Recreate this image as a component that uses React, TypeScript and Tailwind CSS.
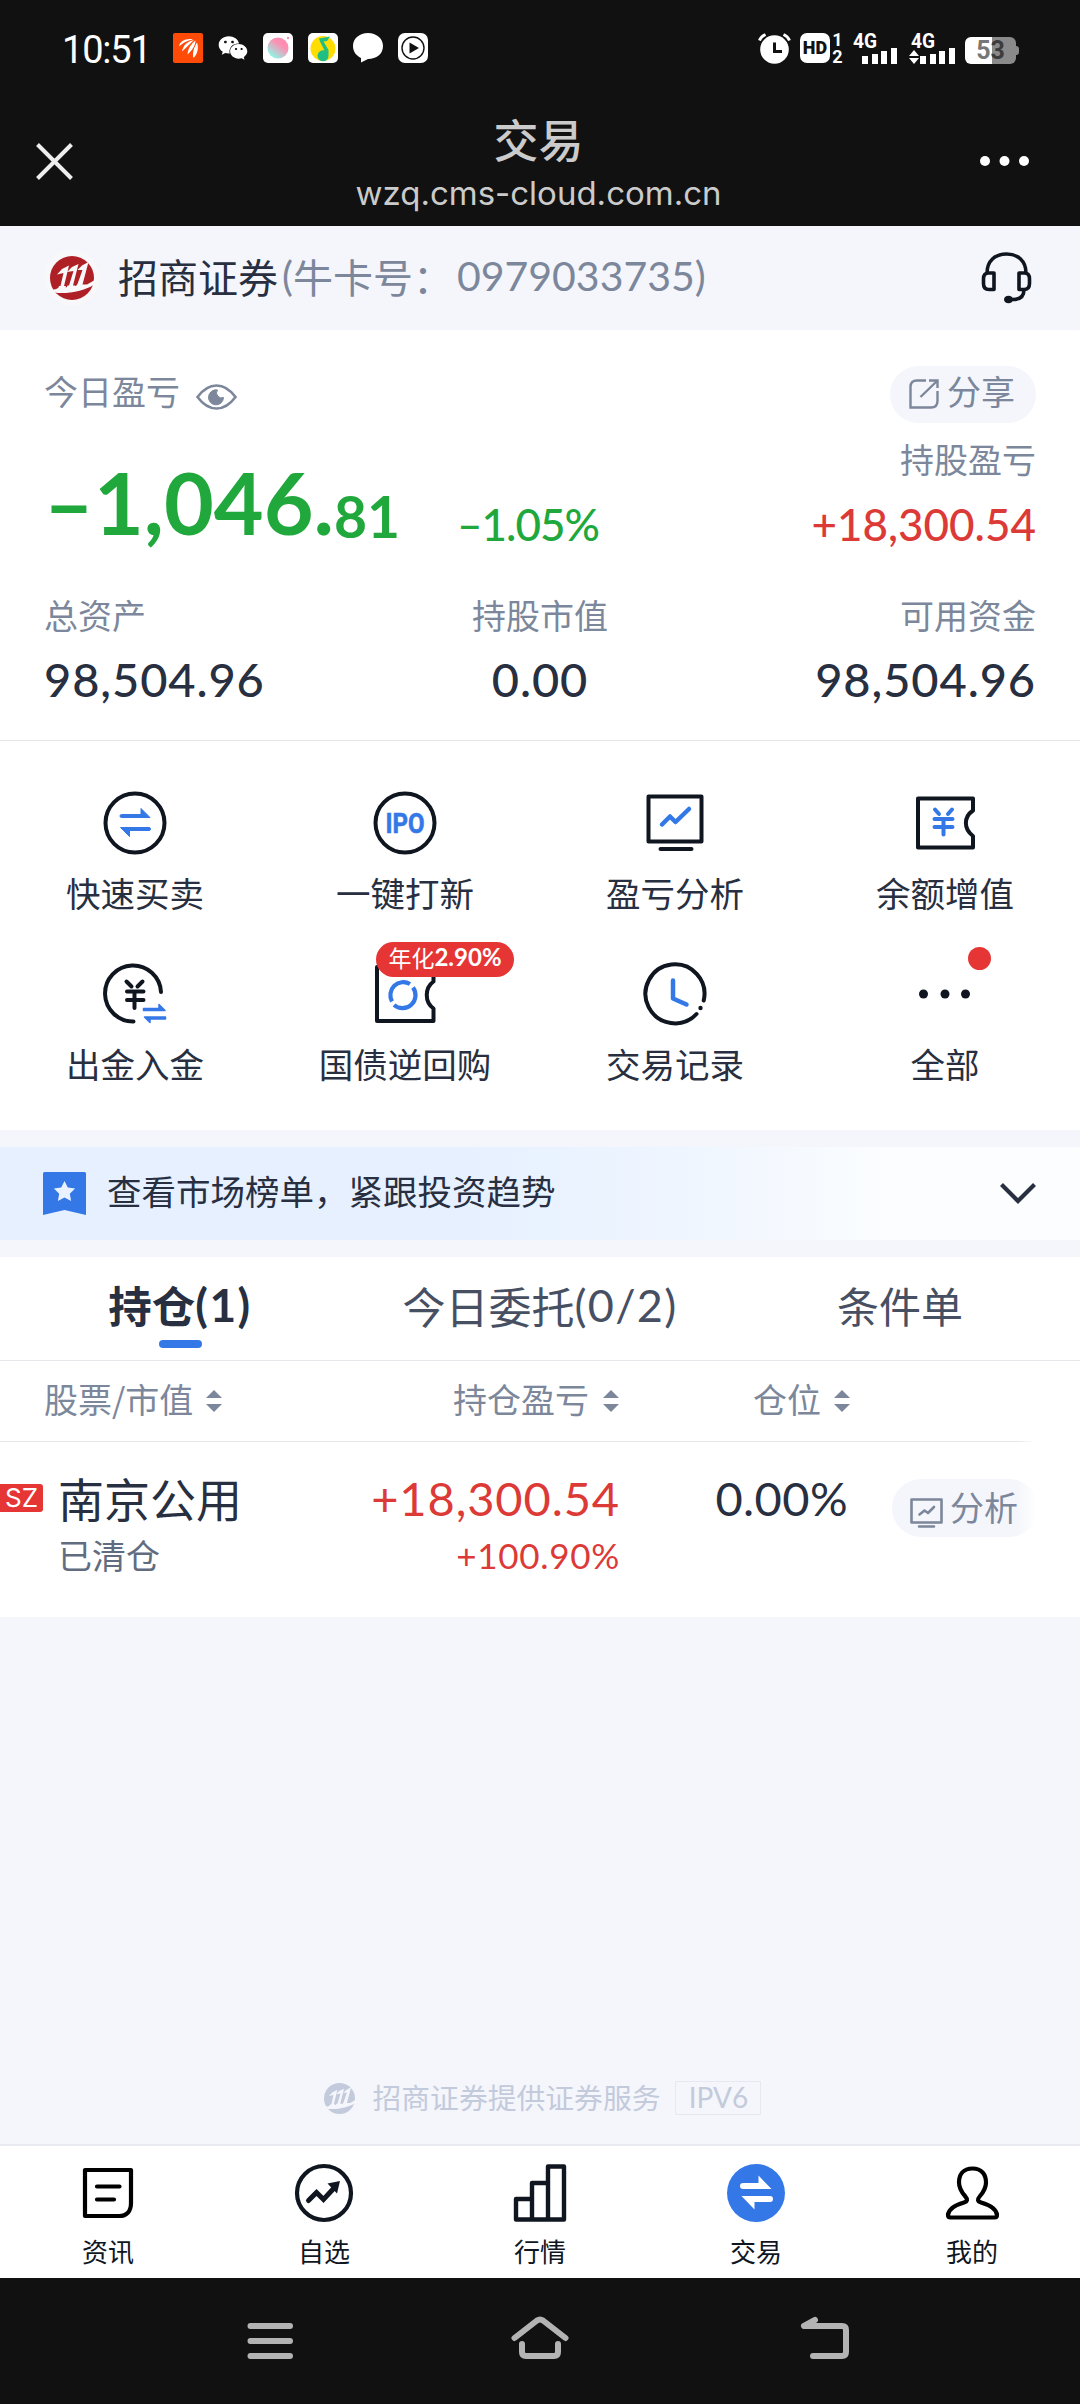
import React from 'react'
import { FaWeixin } from 'react-icons/fa'

const INK = '#10161f'
const BLUE = '#3478e8'

const Logo = ({ size, color, bg }: { size: number; color: string; bg: string }) => (
  <svg width={size} height={size} viewBox="0 0 44 44" fill="none">
    <circle cx="22" cy="22" r="22" fill={color} />
    <path d="M7 18.500l5-5.500 7-3.500-5 20.500h2l-1 2-7 .5 1-2.500h1.500L13.500 17zM17 16l5-5 6.500-3-5.500 21.500h2.500L24.500 31l-8 1 1-2.500H19L23.500 15zM27.500 14l4.500-4.500L38.500 6l-6 22.500H37l9-5-1 4.500C37 33.500 21 38 6 36.800L0 33.500c3 .5 6 0 8-1.500L26 30l1.500-2 5-14z" fill={bg} />
  </svg>
)

const Sort = () => (
  <svg width="16" height="22" viewBox="0 0 16 22" fill="#7c879b">
    <path d="M8 0l8 8H0zM8 22l8-8H0z" />
  </svg>
)

const SwapIcon = () => (
  <svg width="64" height="64" viewBox="0 0 64 64" fill="none">
    <circle cx="32" cy="32" r="29.500" stroke={INK} strokeWidth="4" />
    <path d="M18.500 23.500H38V17.500L47 26.500H18.500a1.500 1.500 0 010-3zM46 36.500a1.500 1.500 0 010 3H26.500V45.500L17.500 36.500z" fill={BLUE} stroke={BLUE} />
  </svg>
)

const IpoIcon = () => (
  <svg width="64" height="64" viewBox="0 0 64 64" fill="none">
    <circle cx="32" cy="32" r="29.500" stroke={INK} strokeWidth="4" />
    <text x="12.500" y="41.500" textLength="39" lengthAdjust="spacingAndGlyphs" fill={BLUE} stroke={BLUE} strokeWidth="0.600" className="font-[Roboto] text-[28px] font-bold">IPO</text>
  </svg>
)

const AnalysisIcon = () => (
  <svg width="64" height="64" viewBox="0 0 64 64" fill="none" strokeLinecap="round" strokeLinejoin="round" strokeWidth="4">
    <path d="M5.500 5.500h53v45h-53zM17.500 58h31" stroke={INK} />
    <path d="M19 33.500l8-8 5.500 5.500L46 18" stroke={BLUE} strokeWidth="4.500" />
  </svg>
)

const CouponIcon = () => (
  <svg width="64" height="64" viewBox="0 0 64 64" fill="none" strokeLinecap="round" strokeLinejoin="round" strokeWidth="4">
    <path d="M60 19.500C50.500 26 50.500 38 60 45V56.500H5V7.500h55z" stroke={INK} />
    <path d="M22 18.500l4 4.500M39 18.500L35 23M21.500 28h18M21.500 36h18M30.500 28v15.500" stroke={BLUE} />
  </svg>
)

const CashIcon = () => (
  <svg width="64" height="64" viewBox="0 0 64 64" fill="none" strokeLinecap="round" strokeLinejoin="round" strokeWidth="4">
    <path d="M58 30A28 28 0 1030.500 59.500" stroke={INK} />
    <path d="M23.500 19.500l5 5M39.500 19.500l-5 5M24 29.500h16.500M24 38h16.500M31.500 30v16" stroke={INK} />
    <path d="M40.500 46.500H56v-4l6 6H40.500zM62.500 55H41.500l5.500 5.500V57h15.500z" fill={BLUE} stroke={BLUE} strokeWidth="1.500" />
  </svg>
)

const RepoIcon = () => (
  <svg width="64" height="64" viewBox="0 0 64 64" fill="none" strokeLinecap="round" strokeLinejoin="round" strokeWidth="4">
    <path d="M60.500 19.500C51.500 26 51.500 40 60.500 46.500V59H4V5h56.500z" stroke={INK} />
    <path d="M37 22A13 13 0 0019 39.500M21 43A13 13 0 0040 25.500" stroke={BLUE} strokeWidth="4.200" strokeLinecap="butt" />
  </svg>
)

const ClockIcon = () => (
  <svg width="64" height="64" viewBox="0 0 64 64" fill="none" strokeLinecap="round" strokeLinejoin="round" strokeWidth="4">
    <path d="M60.700 38.500A29.500 29.500 0 1053.500 52" stroke={INK} />
    <circle cx="57.500" cy="46" r="2.200" fill={INK} />
    <path d="M30 18.500v18l13.500 6" stroke={BLUE} strokeWidth="4.500" />
  </svg>
)

const MoreIcon = () => (
  <svg width="64" height="64" viewBox="0 0 64 64" fill={INK}>
    <circle cx="10.500" cy="32" r="4.500" />
    <circle cx="32" cy="32" r="4.500" />
    <circle cx="52.500" cy="32" r="4.500" />
  </svg>
)

const menus = [
  { name: '快速买卖', icon: <SwapIcon /> },
  { name: '一键打新', icon: <IpoIcon /> },
  { name: '盈亏分析', icon: <AnalysisIcon /> },
  { name: '余额增值', icon: <CouponIcon /> },
  { name: '出金入金', icon: <CashIcon /> },
  { name: '国债逆回购', icon: <RepoIcon />, badge: '2.90%' },
  { name: '交易记录', icon: <ClockIcon /> },
  { name: '全部', icon: <MoreIcon />, dot: true },
]

const tabs = [
  {
    name: '资讯',
    icon: (
      <svg width="60" height="60" viewBox="0 0 60 60" fill="none" stroke="#000" strokeWidth="4.200" strokeLinecap="round" strokeLinejoin="round">
        <path d="M7 7h46v33c0 8-4 13-12 13H7z" />
        <path d="M19 23.500h22.500M19 36.500h17" />
      </svg>
    ),
  },
  {
    name: '自选',
    icon: (
      <svg width="60" height="60" viewBox="0 0 60 60" fill="none" stroke={INK} strokeWidth="4.200">
        <circle cx="30" cy="30" r="27" />
        <path d="M14.500 37.500l8-8 7 7L41 24" strokeWidth="5" strokeLinecap="round" />
        <path d="M33.500 20.500L46 18l-3 12.500z" fill={INK} stroke="none" />
      </svg>
    ),
  },
  {
    name: '行情',
    icon: (
      <svg width="60" height="60" viewBox="0 0 60 60" fill="none" stroke={INK} strokeWidth="4.400" strokeLinejoin="round">
        <path d="M6 36h16v20.500H6zM22 20h16v36.500H22zM38 3.500h16v53H38z" />
      </svg>
    ),
  },
  {
    name: '交易',
    icon: (
      <svg width="60" height="60" viewBox="0 0 60 60" fill="#fff">
        <circle cx="30" cy="30" r="29" fill={BLUE} />
        <path d="M17 20H32.500V12.500L45.500 26H17a3 3 0 010-6zM44 33a3 3 0 010 6H28.500V46.500L15.500 33z" />
      </svg>
    ),
  },
  {
    name: '我的',
    icon: (
      <svg width="60" height="60" viewBox="0 0 60 60" fill="none" stroke="#000" strokeWidth="4.200" strokeLinejoin="round">
        <path d="M30.500 5.500C21 5.500 17 12 17 19.500c0 6 2.500 9.500 6 13.500 3 3.500 2.500 5.500-1 6.500C13.500 42 6.500 46 6 52c0 1.500 1 2.500 2.500 2.500h44c1.500 0 2.500-1 2.500-2.500-.5-6-7.500-10-16-12.500-3.500-1-4-3-1-6.500 3.500-4 6-7.500 6-13.500 0-7.500-4-14-13.500-14z" />
      </svg>
    ),
  },
]

const StatusBar = () => (
  <div className="flex h-[96px] items-center pl-[62px] pr-[61px]">
    <span className="w-[92px] pt-[3px] font-[Roboto] text-[38px] leading-[40px] tracking-[-1.2px] text-white">10:51</span>
    <div className="ml-[19px] flex items-center gap-[15px]">
      <svg width="30" height="30" viewBox="0 0 30 30">
        <rect width="30" height="30" rx="2" fill="#ff4a08" />
        <path d="M6 13.500C7 8 13 5 20 6.500 14 7.500 10 10 6 13.500zM9 18.500C10 12.500 14 8.500 21 7c-3.500 3-7 7-12 11.500zM14.500 21.500C15 15.500 18 11 22.500 7.500 22.500 12.500 19 17.500 14.500 21.500zM20.500 25C19 20.500 21 14 24 9.500 26 15 24.500 21 20.500 25z" fill="#fff" />
      </svg>
      <FaWeixin className="size-[30px] text-white" />
      <svg width="30" height="30" viewBox="0 0 30 30">
        <defs>
          <linearGradient id="pk" x1="0.800" y1="0.100" x2="0.200" y2="0.900">
            <stop offset="0.300" stopColor="#ff8fb2" />
            <stop offset="1" stopColor="#8ff5e6" />
          </linearGradient>
        </defs>
        <rect width="30" height="30" rx="5" fill="#fff" />
        <circle cx="15" cy="15" r="10.500" fill="url(#pk)" />
        <circle cx="25" cy="5" r="1.200" fill="#ff8fb2" />
      </svg>
      <svg width="30" height="30" viewBox="0 0 30 30">
        <rect width="30" height="30" rx="5" fill="#fff" />
        <circle cx="15" cy="15.500" r="12.500" fill="#fd0" />
        <path d="M11 5.500l11-2-3 4.500-3.500.5 5 8.500v5.500a5.500 5.500 0 11-4-5L12 8.500z" fill="#1fbe84" />
      </svg>
      <svg width="30" height="30" viewBox="0 0 30 30">
        <path d="M15 0c8.500 0 15 5.500 15 13 0 8-6.500 13-15 13l-7 3.500V25C3 22.500 0 18.500 0 13 0 5.500 6.500 0 15 0z" fill="#fff" />
      </svg>
      <svg width="30" height="30" viewBox="0 0 30 30">
        <rect width="30" height="30" rx="7" fill="#fff" />
        <circle cx="15" cy="15" r="11" fill="none" stroke="#111" strokeWidth="1.400" />
        <path d="M11.500 9.500l9.500 5.500-9.500 5.500z" fill="#111" />
      </svg>
    </div>
    <div className="ml-auto flex items-center">
      <svg width="33" height="31" viewBox="0 0 33 31" fill="none">
        <circle cx="16.500" cy="16.500" r="14.300" fill="#fff" />
        <path d="M1.500 7.500Q3 3.500 7.500 1.500M31.500 7.500Q30 3.500 25.500 1.500" stroke="#fff" strokeWidth="3" />
        <path d="M16.500 9.500v9h7.500" stroke="#111" strokeWidth="3" />
      </svg>
      <div className="ml-[9px] flex h-[30px] w-[30px] items-center justify-center rounded-[7px] bg-white font-[Roboto] text-[18px] font-black leading-none text-[#111]">HD</div>
      <div className="ml-[2px] flex w-[11px] flex-col items-center font-[Roboto] text-[18px] font-bold leading-[17px] text-white">
        <span>1</span>
        <span>2</span>
      </div>
      <svg className="-mt-[8px] ml-[10px]" width="46" height="39" viewBox="0 -8 46 39" fill="#fff">
        <text x="0" y="15" textLength="24" lengthAdjust="spacingAndGlyphs" className="font-[Roboto] text-[20px] font-bold">4G</text>
        <path d="M9 23h6v8H9zM19 21h6v10h-6zM28 18h6v13h-6zM38 15h6v16h-6z" />
      </svg>
      <svg className="-mt-[8px] ml-[10px]" width="47" height="39" viewBox="0 -8 47 39" fill="#fff">
        <text x="2" y="15" textLength="24" lengthAdjust="spacingAndGlyphs" className="font-[Roboto] text-[20px] font-bold">4G</text>
        <path d="M0 23l5-6 5 6zM0 25h10l-5 6zM11 23h6v8h-6zM21 21h6v10h-6zM30 18h6v13h-6zM40 15h6v16h-6z" />
      </svg>
      <div className="ml-[9px] mt-[4px] flex h-[27px] w-[51px] items-center justify-center rounded-[6px] bg-[linear-gradient(90deg,#fff_27px,#8a8a8a_27px)] font-[Roboto] text-[25px] font-bold leading-none">
        <span className="text-[#777]">5</span>
        <span className="text-[#3c3c3c]">3</span>
      </div>
      <div className="mt-[4px] h-[9px] w-[3px] rounded-r bg-[#8a8a8a]" />
    </div>
  </div>
)

const TitleBar = () => (
  <div className="grid h-[130px] grid-cols-[1fr_auto_1fr] items-start pl-[36px] pr-[51px]">
    <svg className="mt-[47px]" width="37" height="37" viewBox="0 0 37 37" stroke="#eee" strokeWidth="4">
      <path d="M1.500 1.500l34 34M35.500 1.500l-34 34" />
    </svg>
    <div className="flex translate-x-[6px] flex-col items-center pt-[16px] text-[#cbcbcb]">
      <div className="text-[45px] font-medium leading-[54px]">交易</div>
      <div className="mt-[7px] font-[Inter] text-[33px] leading-[40px]">wzq.cms-cloud.com.cn</div>
    </div>
    <svg className="mt-[60px] justify-self-end" width="49" height="10" viewBox="0 0 49 10" fill="#fff">
      <circle cx="5" cy="5" r="5" />
      <circle cx="24.500" cy="5" r="5" />
      <circle cx="44" cy="5" r="5" />
    </svg>
  </div>
)

const Broker = () => (
  <div className="flex h-[104px] items-center pl-[44px] pr-[48px]">
    <div className="flex size-[56px] items-center justify-center rounded-full bg-[#f8f8fa]">
      <Logo size={44} color="#ae2026" bg="#f8f8fa" />
    </div>
    <div className="mb-[4px] ml-[18px] flex text-[40px] leading-[56px] text-[#272f41]">
      招商证券
      <span className="ml-[4px] font-[Lato] text-[41px] text-[#7c879b]">(</span>
      <span className="text-[#7c879b]">牛卡号：</span>
      <span className="ml-[4px] font-[Lato] text-[41px] text-[#7c879b]">0979033735)</span>
    </div>
    <svg className="ml-auto" width="51" height="52" viewBox="0 0 51 52" fill="none" stroke={INK} strokeWidth="3.600" strokeLinejoin="round">
      <path d="M6 21C6 9 14 2 25.500 2S45 9 45 21M2.500 27c0-4 1.500-6 5-6H13v16.500H8c-4 0-5.500-2-5.500-6zM48.500 27c0-4-1.500-6-5-6H38v16.500h5c4 0 5.500-2 5.500-6zM43 37.500c0 7-4 10-11 10h-4" />
      <ellipse cx="27.500" cy="47.500" rx="4.500" ry="3.800" fill={INK} stroke="none" />
    </svg>
  </div>
)

const Assets = () => (
  <div className="h-[411px] border-b border-[#e6e7ea] bg-white px-[44px] pt-[36px]">
    <div className="flex h-[57px] items-start justify-between text-[34px] text-[#7c879b]">
      <div className="flex items-center gap-[16px]">
        <span className="leading-[49px]">今日盈亏</span>
        <svg className="mt-[13px]" width="41" height="26" viewBox="0 0 41 26" fill="none">
          <path d="M1.500 13Q10 1.500 20.500 1.500T39.500 13Q31 24.500 20.500 24.500T1.500 13z" stroke="#7c879b" strokeWidth="2.600" />
          <path d="M21.500 6a5 5 0 006 7.500A7.500 7.500 0 1121.500 6z" fill="#7c879b" stroke="#7c879b" />
        </svg>
      </div>
      <div className="flex h-[57px] w-[146px] items-start rounded-full bg-[#f4f6fb] pl-[19px]">
        <svg className="mt-[13px]" width="30" height="30" viewBox="0 0 30 30" fill="none" stroke="#7c879b" strokeWidth="2.400">
          <path d="M17 1.500H8Q1.500 1.500 1.500 8v20.500H22q6.500 0 6.500-6.500V12M11.500 18L28 2M20 1.500h8.500V9" />
        </svg>
        <span className="ml-[8px] leading-[49px]">分享</span>
      </div>
    </div>
    <div className="flex h-[156px] justify-between">
      <div className="flex items-end pb-[34px] font-[Lato] text-[#20a83c]">
        <div className="w-[413px] whitespace-nowrap">
          <span className="text-[86px] font-bold leading-[86px]">–1,046.</span>
          <span className="relative top-[3px] text-[57px] font-bold leading-[58px]">81</span>
        </div>
        <span className="relative top-[5px] text-[44px] font-medium leading-[52px] tracking-[-1px]">–1.05%</span>
      </div>
      <div className="flex flex-col items-end pt-[11px]">
        <span className="text-[34px] leading-[50px] text-[#7c879b]">持股盈亏</span>
        <span className="mt-[14px] font-[Lato] text-[44px] font-medium leading-[52px] text-[#dc3a37]">+18,300.54</span>
      </div>
    </div>
    <div className="grid grid-cols-3 pt-[11px] text-[34px] leading-[50px] text-[#7c879b]">
      <span>总资产</span>
      <span className="text-center">持股市值</span>
      <span className="text-right">可用资金</span>
    </div>
    <div className="mt-[12px] grid grid-cols-3 font-[Lato] text-[47px] font-medium leading-[54px] tracking-[0.9px] text-[#272f41]">
      <span>98,504.96</span>
      <span className="text-center">0.00</span>
      <span className="text-right">98,504.96</span>
    </div>
  </div>
)

const Menus = () => (
  <div className="grid h-[389px] grid-cols-4 content-start bg-white pt-[50px]">
    {menus.map((m) => (
      <div key={m.name} className="relative flex h-[171px] flex-col items-center">
        {m.icon}
        <span className="mt-[12px] text-[34.500px] leading-[50px] text-[#272f41]">{m.name}</span>
        {m.badge && (
          <div className="absolute left-[106px] top-[-20px] flex h-[35px] w-[138px] items-center justify-center rounded-full bg-[#e63535] pb-[5px] text-[23px] leading-[30px] text-white">
            年化<span className="font-[Lato] text-[24px] font-bold">{m.badge}</span>
          </div>
        )}
        {m.dot && <div className="absolute left-[158px] top-[-15px] size-[23px] rounded-full bg-[#e63535]" />}
      </div>
    ))}
  </div>
)

const Banner = () => (
  <div className="my-[17px] flex h-[93px] items-center bg-[linear-gradient(90deg,#e6f0ff_0%,#e6f0ff_42%,#eef5ff_62%,#fbfdff_82%,#fcfdff_100%)] pl-[43px] pr-[44px]">
    <svg width="43" height="43" viewBox="0 0 43 43">
      <path d="M1.500 0h40Q43 0 43 1.500V43L21.500 38 0 43V1.500Q0 0 1.500 0z" fill={BLUE} />
      <path d="M21.500 9l3.300 6.600 7.300 1-5.300 5.100 1.300 7.300-6.600-3.500-6.600 3.500 1.300-7.300-5.300-5.100 7.300-1z" fill="#eaf2ff" />
    </svg>
    <span className="mb-[7px] ml-[21px] text-[34.500px] leading-[50px] text-[#272f41]">查看市场榜单，紧跟投资趋势</span>
    <svg className="ml-auto" width="36" height="21" viewBox="0 0 36 21" fill="none" stroke="#272f41" strokeWidth="4.200">
      <path d="M1.500 1.500L18 18 34.500 1.500" />
    </svg>
  </div>
)

const Holdings = () => (
  <div className="relative h-[360px] bg-white">
    <div className="grid h-[104px] grid-cols-3 border-b border-[#e6e7ea] pt-[18px] text-center text-[42px] leading-[60px] text-[#475063]">
      <div className="flex flex-col items-center font-bold text-[#272f41]">
        <div className="flex text-[43.500px]">
          持仓<span className="font-[Lato] text-[46px] tracking-[1.5px]">(1)</span>
        </div>
        <div className="mt-[5px] h-[8px] w-[43px] rounded-full bg-[#3478e8]" />
      </div>
      <div className="flex justify-center text-[43px]">
        今日委托<span className="font-[Lato] text-[45px] tracking-[1.3px]">(0/2)</span>
      </div>
      <div>条件单</div>
    </div>
    <div className="flex h-[81px] items-center border-b border-[#e6e7ea] text-[34px] leading-[50px] text-[#7c879b]">
      <div className="ml-[44px] flex w-[178px] items-center justify-between">
        <span className="mb-[4px]">股票/市值</span>
        <Sort />
      </div>
      <div className="ml-[231px] flex w-[166px] items-center justify-between">
        <span className="mb-[4px]">持仓盈亏</span>
        <Sort />
      </div>
      <div className="ml-[134px] flex w-[97px] items-center justify-between">
        <span className="mb-[4px]">仓位</span>
        <Sort />
      </div>
    </div>
    <div className="flex items-start pt-[29px]">
      <div className="mt-[13px] flex h-[28px] w-[43px] items-center justify-center rounded-r-[3px] bg-[#e63535] font-[Inter] text-[26px] leading-none text-white">SZ</div>
      <div className="ml-[15px] flex w-[200px] flex-col text-[#272f41]">
        <span className="text-[46px] leading-[53px]">南京公用</span>
        <span className="mt-[6px] text-[34px] leading-[50px] text-[#626c80]">已清仓</span>
      </div>
      <div className="flex w-[362px] flex-col items-end font-[Lato] text-[#dc3a37]">
        <span className="text-[47px] leading-[54px] tracking-[0.9px]">+18,300.54</span>
        <span className="mt-[5px] text-[35px] leading-[50px] tracking-[0.7px]">+100.90%</span>
      </div>
      <span className="w-[228px] text-right font-[Lato] text-[47px] leading-[54px] tracking-[0.4px] text-[#272f41]">0.00%</span>
      <div className="ml-[44px] mt-[8px] flex h-[58px] w-[146px] items-start rounded-full bg-[#f4f6fb] pl-[18px]">
        <svg className="mt-[19px]" width="33" height="30" viewBox="0 0 33 30" fill="none" stroke="#7c879b" strokeWidth="2.600" strokeLinejoin="round" strokeLinecap="round">
          <path d="M1.500 1.500h30v23h-30zM9 28.500h15" />
          <path d="M9.500 16.500l5-4 3.500 2.500 6-6" />
        </svg>
        <span className="ml-[7px] text-[34px] leading-[55px] text-[#7c879b]">分析</span>
      </div>
    </div>
    <div className="absolute right-0 top-[105px] h-[255px] w-[64px] bg-[linear-gradient(90deg,#fff0,#fff_20px)]" />
  </div>
)

const Footer = () => (
  <div className="mt-[463px] flex h-[36px] items-center justify-center pl-[5px] text-[28.800px] leading-[36px] text-[#c3cadb]">
    <Logo size={31} color="#c3cadb" bg="#f4f6fb" />
    <span className="mb-[2px] ml-[18px]">招商证券提供证券服务</span>
    <span className="ml-[15px] flex h-[34px] w-[86px] items-center justify-center border border-[#e6e9f1] pb-[2px] font-[Lato] text-[28px]">IPV6</span>
  </div>
)

const TabBar = () => (
  <div className="mt-[28px] grid h-[134px] grid-cols-5 border-t-2 border-[#e8eaef] bg-white pt-[17px]">
    {tabs.map((t) => (
      <div key={t.name} className="flex flex-col items-center">
        {t.icon}
        <span className="mt-[9px] text-[26px] leading-[38px] text-[#10161f]">{t.name}</span>
      </div>
    ))}
  </div>
)

const SystemNav = () => (
  <div className="h-[126px] bg-[#111]">
    <svg width="1080" height="126" viewBox="0 0 1080 126" fill="none" stroke="#b3b3b3" strokeWidth="6" strokeLinecap="round" strokeLinejoin="round">
      <path d="M250.500 48h39.500M250.500 63h39.500M250.500 78h39.500" />
      <path d="M514.500 60L537 42.500q3-2 6 0L565.500 60M522 66v8q0 4 4 4h28q4 0 4-4v-8" />
      <path d="M815 42l-11 6h38q4 0 4 4v22q0 4-4 4h-29" />
    </svg>
  </div>
)

const App = () => {
  return (
    <div className="flex h-[2404px] w-[1080px] flex-col overflow-hidden bg-[#f4f6fb] font-['Noto_Sans_CJK_SC',sans-serif]">
      <div className="h-[226px] bg-[#111]">
        <StatusBar />
        <TitleBar />
      </div>
      <Broker />
      <Assets />
      <Menus />
      <Banner />
      <Holdings />
      <Footer />
      <TabBar />
      <SystemNav />
    </div>
  )
}

export default App
